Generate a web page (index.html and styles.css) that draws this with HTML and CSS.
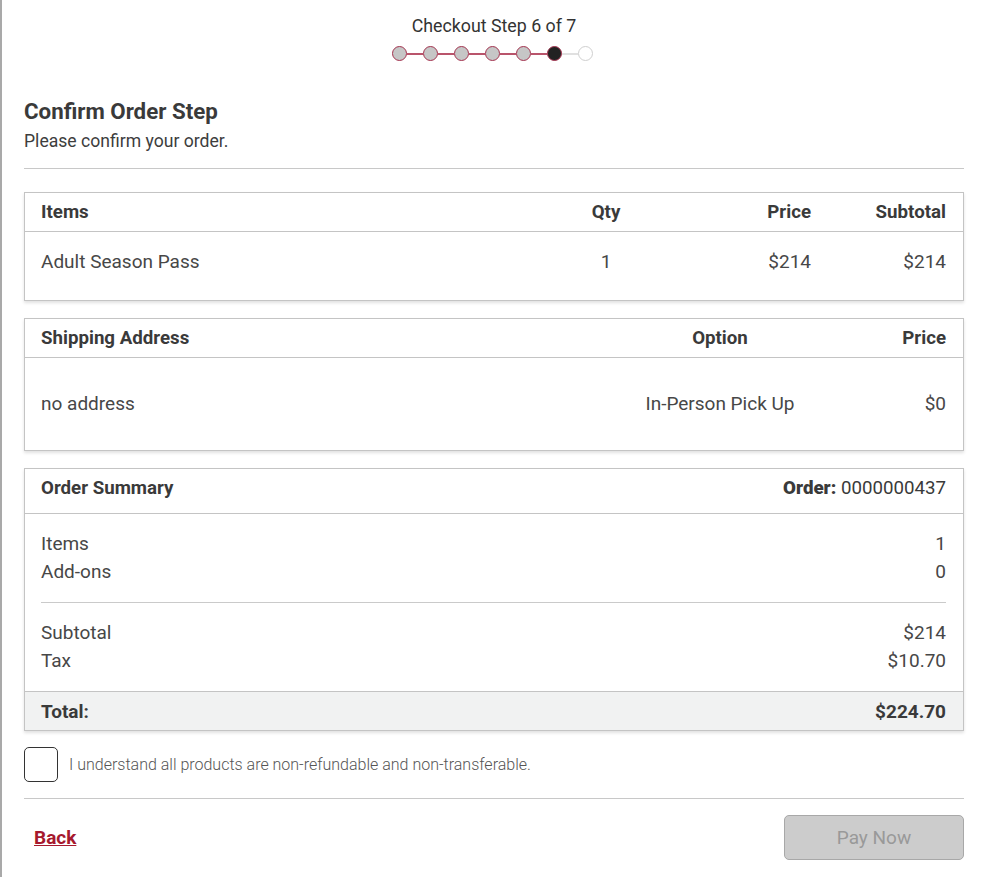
FILE: index.html
```html
<!DOCTYPE html>
<html>
<head>
<meta charset="utf-8">
<link rel="stylesheet" href="styles.css">
</head>
<body>
<div class="page">
  <div class="stepper">
    <div class="step-title">Checkout Step 6 of 7</div>
    <div class="dots">
      <span class="dot done"></span><span class="link done"></span>
      <span class="dot done"></span><span class="link done"></span>
      <span class="dot done"></span><span class="link done"></span>
      <span class="dot done"></span><span class="link done"></span>
      <span class="dot done"></span><span class="link done"></span>
      <span class="dot current"></span><span class="link todo"></span>
      <span class="dot todo"></span>
    </div>
  </div>

  <h1 class="title">Confirm Order Step</h1>
  <p class="subtitle">Please confirm your order.</p>
  <div class="rule"></div>

  <div class="card first-card">
    <div class="row head cols-items">
      <div>Items</div><div class="c">Qty</div><div class="r">Price</div><div class="r">Subtotal</div>
    </div>
    <div class="row body-row cols-items items-body">
      <div>Adult Season Pass</div><div class="c">1</div><div class="r">$214</div><div class="r">$214</div>
    </div>
  </div>

  <div class="card">
    <div class="row head cols-ship">
      <div>Shipping Address</div><div class="c">Option</div><div class="r">Price</div>
    </div>
    <div class="row body-row cols-ship ship-body">
      <div>no address</div><div class="c">In-Person Pick Up</div><div class="r">$0</div>
    </div>
  </div>

  <div class="card">
    <div class="row head summary-head">
      <div>Order Summary</div><div class="r"><b>Order:</b> <span class="norm">0000000437</span></div>
    </div>
    <div class="summary-body">
      <div class="line"><span>Items</span><span>1</span></div>
      <div class="line"><span>Add-ons</span><span>0</span></div>
      <div class="inner-rule"></div>
      <div class="line"><span>Subtotal</span><span>$214</span></div>
      <div class="line"><span>Tax</span><span>$10.70</span></div>
    </div>
    <div class="total"><span>Total:</span><span>$224.70</span></div>
  </div>

  <label class="agree">
    <span class="box"></span>
    <span class="agree-text">I understand all products are non-refundable and non-transferable.</span>
  </label>
  <div class="rule rule2"></div>

  <div class="actions">
    <a class="back" href="#">Back</a>
    <button class="pay" disabled>Pay Now</button>
  </div>
</div>
</body>
</html>
```

FILE: styles.css
```css
html, body {
  margin: 0;
  padding: 0;
  background: #fff;
}
body {
  font-family: Roboto, "Liberation Sans", Arial, sans-serif;
  color: #3a3a3a;
  border-left: 2px solid #a9a9a9;
  min-height: 877px;
  box-sizing: border-box;
}
.page {
  width: 940px;
  margin-left: 22px;
  padding-top: 14px;
}
.stepper {
  display: flex;
  flex-direction: column;
  align-items: center;
}
.step-title {
  font-size: 17.8px;
  line-height: 24px;
  color: #333;
}
.dots {
  display: flex;
  align-items: center;
  margin-top: 8px;
  margin-left: -3px;
}
.dot {
  width: 15px;
  height: 15px;
  border-radius: 50%;
  box-sizing: border-box;
  border: 1.5px solid #a3334f;
  background: #c6c6c6;
}
.dot.current {
  background: #222;
  border-color: #a3334f;
}
.dot.todo {
  background: #fff;
  border-color: #cfcfcf;
}
.link {
  width: 16px;
  height: 2px;
  background: #b9546b;
}
.link.todo {
  background: #e0e0e0;
}
.title {
  font-size: 22.3px;
  font-weight: 700;
  color: #3a3a3a;
  margin: 36px 0 0;
  line-height: 28px;
}
.subtitle {
  font-size: 17.6px;
  margin: 4px 0 0;
  line-height: 24px;
  color: #3d3d3d;
}
.rule {
  height: 1px;
  background: #c8c8c8;
  margin-top: 15px;
}
.card {
  border: 1px solid #c4c4c4;
  box-shadow: 0 2px 3px rgba(0,0,0,0.12);
  margin-top: 17px;
}
.first-card { margin-top: 23px; }
.row {
  display: grid;
  padding: 0 17px 0 16px;
  align-items: center;
}
.cols-items { grid-template-columns: 1fr 100px 155px 135px; }
.cols-ship { grid-template-columns: 1fr 200px 126px; }
.c { text-align: center; }
.r { text-align: right; }
.head {
  height: 38px;
  border-bottom: 1px solid #c4c4c4;
  font-weight: 700;
  font-size: 18.7px;
  color: #3a3a3a;
}
.body-row {
  font-size: 19px;
  color: #474747;
}
.items-body { height: 68px; padding-bottom: 9px; box-sizing: border-box; }
.ship-body { height: 92px; padding-bottom: 2px; box-sizing: border-box; }
.summary-head {
  grid-template-columns: 1fr auto;
  padding-bottom: 6px;
  box-sizing: border-box;
  height: 45px;
}
.norm { font-weight: 400; }
.summary-body {
  padding: 16px 17px 16px 16px;
}
.line {
  display: flex;
  justify-content: space-between;
  font-size: 19px;
  line-height: 28px;
  color: #474747;
}
.inner-rule {
  height: 1px;
  background: #cacaca;
  margin: 16px 0 16px;
}
.total {
  display: flex;
  justify-content: space-between;
  background: #f1f2f2;
  border-top: 1px solid #c4c4c4;
  height: 38px;
  align-items: center;
  padding: 0 17px 0 16px;
  font-weight: 700;
  font-size: 19px;
  color: #3a3a3a;
}
.agree {
  display: flex;
  align-items: center;
  margin-top: 16px;
  gap: 11px;
}
.box {
  width: 34px;
  height: 35px;
  box-sizing: border-box;
  border: 1.5px solid #333;
  border-radius: 5px;
}
.agree-text {
  font-size: 16px;
  font-weight: 300;
  color: #555;
}
.rule2 {
  margin-top: 16px;
}
.actions {
  display: flex;
  justify-content: space-between;
  align-items: center;
  margin-top: 16px;
}
.back {
  margin-left: 10px;
  color: #a6192e;
  font-weight: 700;
  font-size: 19px;
  text-decoration: underline;
}
.pay {
  width: 180px;
  height: 45px;
  background: #cccccc;
  border: 1px solid #a8a8a8;
  border-radius: 5px;
  color: #999;
  font-family: Roboto, "Liberation Sans", Arial, sans-serif;
  font-size: 19px;
}
```
